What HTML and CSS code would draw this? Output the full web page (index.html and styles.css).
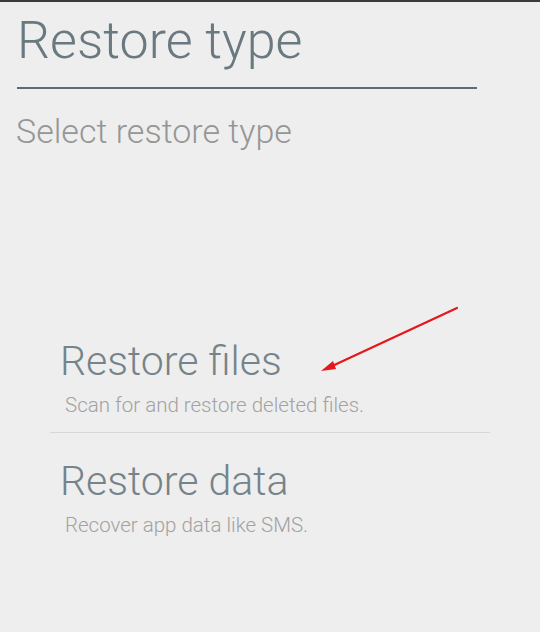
FILE: index.html
```html
<!DOCTYPE html>
<html>

<head>
    <title>Restore type</title>
    <link rel="stylesheet" href="styles.css">
</head>

<body>
    <div class="status-edge"></div>

    <div class="screen">
        <div class="header">
            <h1>Restore type</h1>
            <div class="header-rule"></div>
            <p class="subtitle">Select restore type</p>
        </div>

        <div class="options">
            <div class="option">
                <div class="option-title">Restore files</div>
                <div class="option-desc">Scan for and restore deleted files.</div>
            </div>
            <div class="option">
                <div class="option-title">Restore data</div>
                <div class="option-desc">Recover app data like SMS.</div>
            </div>
        </div>

        <svg class="pointer" width="540" height="632" viewBox="0 0 540 632">
            <line x1="457" y1="308" x2="330" y2="367" stroke="#e5171c" stroke-width="2.2" stroke-linecap="round" />
            <polygon points="321,371 333,361 336,369" fill="#e5171c" />
        </svg>
    </div>
</body>

</html>
```

FILE: styles.css
```css
body {
    margin: 0;
    background-color: #eeeeee;
    font-family: "Roboto Light", Roboto, "Liberation Sans", sans-serif;
    font-weight: 300;
}

.status-edge {
    height: 2px;
    background-color: #3a3a3a;
}

.screen {
    position: relative;
    height: 630px;
}

.header {
    padding: 0 63px 0 17px;
}

h1 {
    margin: 0;
    padding-top: 6px;
    font-size: 52px;
    font-weight: 300;
    line-height: 66px;
    color: #6a7980;
}

.header-rule {
    height: 2px;
    margin-top: 13px;
    background-color: #5d6c72;
}

.subtitle {
    margin: 20px 0 0 -1px;
    font-size: 34px;
    font-weight: 300;
    line-height: 44px;
    color: #969696;
}

.options {
    margin: 183px 50px 0 50px;
}

.option {
    padding: 0 0 13px 10px;
}

.option + .option {
    border-top: 1px solid #d7d7d7;
    padding-top: 23px;
}

.option-title {
    font-size: 41px;
    line-height: 50px;
    color: #75838a;
}

.option-desc {
    margin: 5px 0 0 5px;
    font-size: 20.5px;
    line-height: 28px;
    color: #a2a2a2;
}

.pointer {
    position: absolute;
    top: -2px;
    left: 0;
}
```
